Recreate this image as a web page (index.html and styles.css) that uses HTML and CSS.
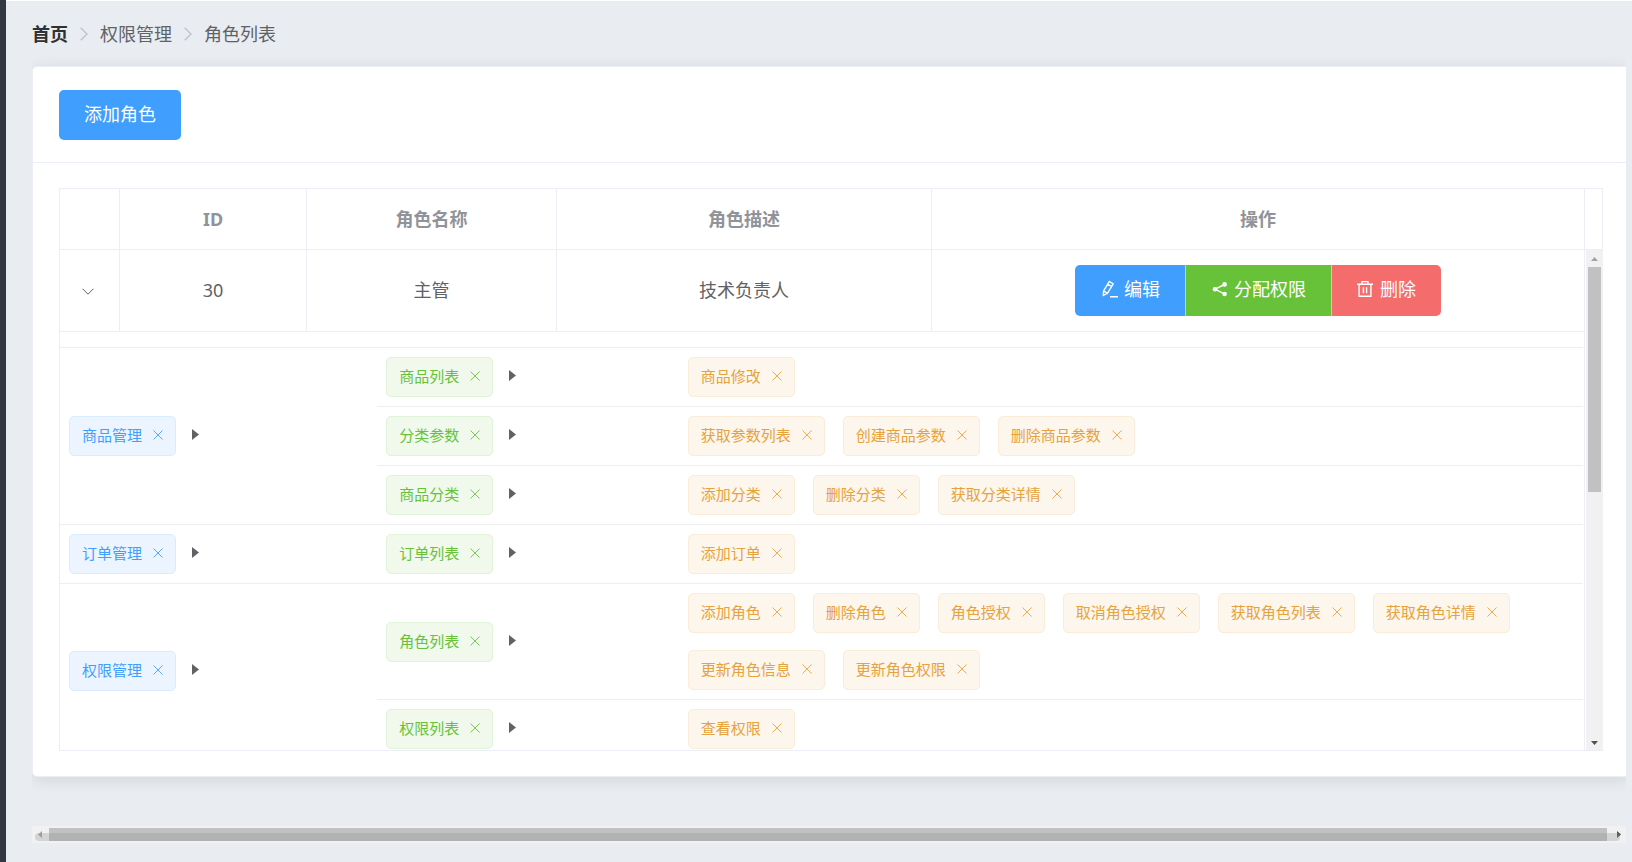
FILE: index.html
```html
<!DOCTYPE html>
<html lang="zh-CN">
<head>
<meta charset="utf-8">
<title>角色列表</title>
<link rel="stylesheet" href="styles.css">
</head>
<body>
<svg class="defs" aria-hidden="true">
  <symbol id="close" viewBox="0 0 10 10"><path d="M0.5 0.5l9 9M9.5 0.5l-9 9" fill="none" stroke="currentColor"/></symbol>
  <symbol id="caret" viewBox="0 0 7 11"><path d="M0 0v11l7-5.5z" fill="currentColor"/></symbol>
  <symbol id="next" viewBox="0 0 8 14"><path d="M0.7 0.7L7 7L0.7 13.3" fill="none" stroke="currentColor" stroke-width="1.5"/></symbol>
</svg>
<div class="app">
  <aside class="sidebar"></aside>
  <main class="main">
    <nav class="breadcrumb" aria-label="面包屑">
      <a class="home" href="#">首页</a>
      <svg class="sep"><use href="#next"/></svg>
      <span>权限管理</span>
      <svg class="sep"><use href="#next"/></svg>
      <span>角色列表</span>
    </nav>
    <div class="view">
      <section class="card">
        <div class="card-head"><button class="btn primary" type="button">添加角色</button></div>
        <div class="card-body">
          <div class="table">
            <table class="grid">
              <colgroup><col class="c-expand"><col class="c-id"><col class="c-name"><col class="c-desc"><col></colgroup>
              <thead><tr><th></th><th>ID</th><th>角色名称</th><th>角色描述</th><th>操作</th></tr></thead>
            </table>
            <div class="gutter"></div>
            <div class="body">
              <table class="grid">
                <colgroup><col class="c-expand"><col class="c-id"><col class="c-name"><col class="c-desc"><col></colgroup>
                <tbody>
                  <tr class="row">
                    <td><button class="expand" type="button" aria-label="收起"><svg width="12" height="7" viewBox="0 0 12 7"><path d="M0.5 0.7L6 6.2L11.5 0.7" fill="none" stroke="currentColor"/></svg></button></td>
                    <td>30</td><td>主管</td><td>技术负责人</td>
                    <td>
                      <div class="group">
                        <button class="btn primary" type="button"><svg width="18" height="18" viewBox="0 0 18 18" fill="none" stroke="currentColor" stroke-width="1.4"><path d="M3.3 15.4L3.6 10.9L9.3 1.5L13.2 3.9L7.5 13.3ZM7.7 4.1L11.6 6.5M3.6 10.9L7.5 13.3M10 16.7H18"/></svg>编辑</button>
                        <button class="btn success" type="button"><svg width="18" height="18" viewBox="0 0 18 18" fill="currentColor"><path d="M14.5 4.5L5 9.2L14.5 14" fill="none" stroke="currentColor" stroke-width="1.4"/><circle cx="5" cy="9.2" r="2.3"/><circle cx="14.6" cy="4.4" r="2.3"/><circle cx="14.6" cy="14" r="2.3"/></svg>分配权限</button>
                        <button class="btn danger" type="button"><svg width="18" height="18" viewBox="0 0 18 18" fill="none" stroke="currentColor" stroke-width="1.4"><path d="M1 4.2H17M6 4V1.6H12V4M3.1 4.5V16.3H14.9V4.5M7.4 7.2V13.2M10.6 7.2V13.2"/></svg>删除</button>
                      </div>
                    </td>
                  </tr>
                  <tr>
                    <td class="detail" colspan="5">
                      <div class="module">
                        <div class="level1"><span class="tag blue">商品管理<button type="button" aria-label="移除"><svg><use href="#close"/></svg></button></span><svg class="caret"><use href="#caret"/></svg></div>
                        <div class="subs">
                          <div class="sub">
                            <div class="level2"><span class="tag green">商品列表<button type="button" aria-label="移除"><svg><use href="#close"/></svg></button></span><svg class="caret"><use href="#caret"/></svg></div>
                            <div class="level3"><span class="tag orange">商品修改<button type="button" aria-label="移除"><svg><use href="#close"/></svg></button></span></div>
                          </div>
                          <div class="sub">
                            <div class="level2"><span class="tag green">分类参数<button type="button" aria-label="移除"><svg><use href="#close"/></svg></button></span><svg class="caret"><use href="#caret"/></svg></div>
                            <div class="level3"><span class="tag orange">获取参数列表<button type="button" aria-label="移除"><svg><use href="#close"/></svg></button></span><span class="tag orange">创建商品参数<button type="button" aria-label="移除"><svg><use href="#close"/></svg></button></span><span class="tag orange">删除商品参数<button type="button" aria-label="移除"><svg><use href="#close"/></svg></button></span></div>
                          </div>
                          <div class="sub">
                            <div class="level2"><span class="tag green">商品分类<button type="button" aria-label="移除"><svg><use href="#close"/></svg></button></span><svg class="caret"><use href="#caret"/></svg></div>
                            <div class="level3"><span class="tag orange">添加分类<button type="button" aria-label="移除"><svg><use href="#close"/></svg></button></span><span class="tag orange">删除分类<button type="button" aria-label="移除"><svg><use href="#close"/></svg></button></span><span class="tag orange">获取分类详情<button type="button" aria-label="移除"><svg><use href="#close"/></svg></button></span></div>
                          </div>
                        </div>
                      </div>
                      <div class="module">
                        <div class="level1"><span class="tag blue">订单管理<button type="button" aria-label="移除"><svg><use href="#close"/></svg></button></span><svg class="caret"><use href="#caret"/></svg></div>
                        <div class="subs">
                          <div class="sub">
                            <div class="level2"><span class="tag green">订单列表<button type="button" aria-label="移除"><svg><use href="#close"/></svg></button></span><svg class="caret"><use href="#caret"/></svg></div>
                            <div class="level3"><span class="tag orange">添加订单<button type="button" aria-label="移除"><svg><use href="#close"/></svg></button></span></div>
                          </div>
                        </div>
                      </div>
                      <div class="module">
                        <div class="level1"><span class="tag blue">权限管理<button type="button" aria-label="移除"><svg><use href="#close"/></svg></button></span><svg class="caret"><use href="#caret"/></svg></div>
                        <div class="subs">
                          <div class="sub">
                            <div class="level2"><span class="tag green">角色列表<button type="button" aria-label="移除"><svg><use href="#close"/></svg></button></span><svg class="caret"><use href="#caret"/></svg></div>
                            <div class="level3"><span class="tag orange">添加角色<button type="button" aria-label="移除"><svg><use href="#close"/></svg></button></span><span class="tag orange">删除角色<button type="button" aria-label="移除"><svg><use href="#close"/></svg></button></span><span class="tag orange">角色授权<button type="button" aria-label="移除"><svg><use href="#close"/></svg></button></span><span class="tag orange">取消角色授权<button type="button" aria-label="移除"><svg><use href="#close"/></svg></button></span><span class="tag orange">获取角色列表<button type="button" aria-label="移除"><svg><use href="#close"/></svg></button></span><span class="tag orange">获取角色详情<button type="button" aria-label="移除"><svg><use href="#close"/></svg></button></span><span class="tag orange">更新角色信息<button type="button" aria-label="移除"><svg><use href="#close"/></svg></button></span><span class="tag orange">更新角色权限<button type="button" aria-label="移除"><svg><use href="#close"/></svg></button></span></div>
                          </div>
                          <div class="sub">
                            <div class="level2"><span class="tag green">权限列表<button type="button" aria-label="移除"><svg><use href="#close"/></svg></button></span><svg class="caret"><use href="#caret"/></svg></div>
                            <div class="level3"><span class="tag orange">查看权限<button type="button" aria-label="移除"><svg><use href="#close"/></svg></button></span></div>
                          </div>
                        </div>
                      </div>
                    </td>
                  </tr>
                </tbody>
              </table>
            </div>
            <div class="vbar">
              <svg width="7" height="4" viewBox="0 0 7 4"><path d="M3.5 0L7 4H0z" fill="#a3a3a3"/></svg>
              <div class="vtrack"><div class="vthumb"></div></div>
              <svg width="7" height="4" viewBox="0 0 7 4"><path d="M0 0H7L3.5 4z" fill="#505050"/></svg>
            </div>
          </div>
        </div>
      </section>
      <div class="hbar">
        <svg width="4" height="7" viewBox="0 0 4 7"><path d="M4 0V7L0 3.5z" fill="#a3a3a3"/></svg>
        <div class="hthumb"></div>
        <svg width="4" height="7" viewBox="0 0 4 7"><path d="M0 0V7L4 3.5z" fill="#505050"/></svg>
        <div class="overlay"></div>
      </div>
    </div>
  </main>
</div>
</body>
</html>
```
FILE: styles.css
```css
* { box-sizing: border-box; }
body {
  margin: 0;
  font-family: "Noto Sans", "Noto Sans CJK SC", sans-serif;
  font-size: 18px;
  line-height: 26px;
  color: #606266;
  background: #e9edf1;
}
button { font: inherit; color: inherit; border: 0; padding: 0; background: none; cursor: pointer; }
svg { display: block; flex: none; }
.defs { position: absolute; width: 0; height: 0; }

.app { display: flex; min-height: 100vh; }
.sidebar { flex: none; width: 6px; background: #333744; }
.main { flex: 1; min-width: 0; padding: 20px 6px 0 26px; border-top: 1px solid #fff; }

.breadcrumb { display: flex; align-items: center; gap: 12px; }
.home { color: #303133; font-weight: 700; text-decoration: none; }
.sep { width: 8px; height: 14px; color: #c0c4cc; }

.view { overflow: hidden; padding-top: 19px; }
.card {
  margin-right: -3px;
  border: 1px solid #ebeef5;
  border-radius: 5px;
  background: #fff;
  box-shadow: 0 3px 15px rgba(0, 0, 0, 0.1);
}
.card-head { padding: 23px 26px 22px; border-bottom: 1px solid #ebeef5; }
.card-body { padding: 25px 25px 25px 26px; }

.btn {
  display: flex;
  align-items: center;
  justify-content: center;
  gap: 6px;
  height: 50px;
  padding: 0 25px 3px;
  border-radius: 5px;
  color: #fff;
}
.primary { background: #409eff; }
.success { background: #67c23a; }
.danger { background: #f56c6c; }
.group { display: flex; justify-content: center; }
.group .btn { height: 51px; border-radius: 0; }
.group .btn:first-child { border-radius: 5px 0 0 5px; }
.group .btn:last-child { border-radius: 0 5px 5px 0; }
.group .btn + .btn { box-shadow: inset 1px 0 rgba(255, 255, 255, 0.5); }

.table {
  display: grid;
  grid-template-columns: 1fr 17px;
  border: 1px solid #ebeef5;
}
.grid { width: 100%; table-layout: fixed; border-collapse: separate; border-spacing: 0; text-align: center; }
.c-expand { width: 60px; }
.c-id { width: 187px; }
.c-name { width: 250px; }
.c-desc { width: 375px; }
th, td { padding: 0; border-right: 1px solid #ebeef5; border-bottom: 1px solid #ebeef5; }
th { height: 61px; color: #909399; font-weight: 700; }
.row td { height: 82px; padding-bottom: 1px; }
.gutter { border-bottom: 1px solid #ebeef5; }
.body { max-height: 500px; overflow: hidden; }
.expand { display: block; margin: 3px auto 0; padding-right: 3px; }

.detail { padding: 15px 1px 0 0; text-align: left; border-bottom: 0; }
.module { display: grid; grid-template-columns: 5fr 19fr; border-bottom: 1px solid #eee; }
.module:first-child { border-top: 1px solid #eee; }
.level1, .level2 { display: flex; align-items: center; gap: 16px; padding: 9px; }
.sub { display: grid; grid-template-columns: 1fr 3fr; }
.sub + .sub { border-top: 1px solid #eee; }
.level3 { display: flex; flex-wrap: wrap; gap: 17px 18px; padding: 9px; }
.caret { width: 7px; height: 11px; margin-bottom: 3px; }

.tag {
  display: flex;
  align-items: center;
  gap: 11px;
  height: 40px;
  padding: 0 12px 2px;
  border: 1px solid;
  border-radius: 5px;
  font-size: 15px;
  white-space: nowrap;
}
.tag svg { width: 10px; height: 10px; opacity: 0.85; }
.blue { color: #409eff; background: #ecf5ff; border-color: #d9ecff; }
.green { color: #67c23a; background: #f0f9eb; border-color: #e1f3d8; }
.orange { color: #e6a23c; background: #fdf6ec; border-color: #faecd8; }

.vbar {
  display: flex;
  flex-direction: column;
  align-items: center;
  margin: 0 -1px 0 1px;
  padding: 7px 0 5px;
  background: #f1f1f1;
}
.vtrack { flex: 1; width: 13px; padding: 6px 0; }
.vthumb { height: 48%; background: #c1c1c1; }

.hbar {
  position: relative;
  display: flex;
  align-items: center;
  gap: 7px;
  height: 17px;
  margin: 49px 0 19px;
  padding: 0 5px 0 6px;
  background: #f1f1f1;
}
.hthumb { flex: 1; height: 13px; margin-right: 3px; background: #c1c1c1; }
.overlay {
  position: absolute;
  left: 3px;
  right: 6px;
  bottom: 2px;
  height: 8px;
  border-radius: 4px;
  background: rgba(144, 147, 153, 0.3);
}
```
